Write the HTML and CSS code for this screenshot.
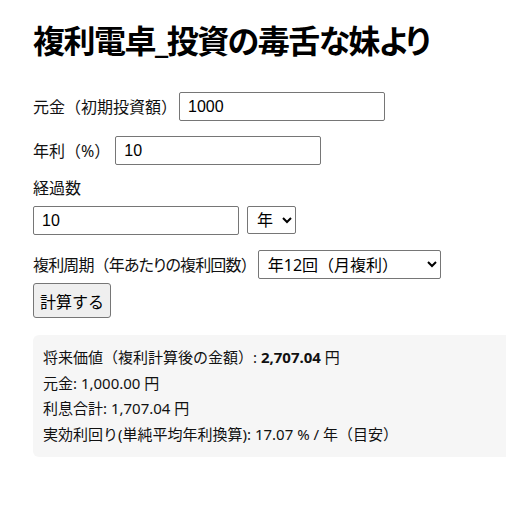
FILE: index.html
```html
<!DOCTYPE html>
<html lang="ja">
<head>
<meta charset="utf-8">
<title>複利電卓_投資の毒舌な妹より</title>
<link rel="stylesheet" href="styles.css">
</head>
<body>
<main class="page">
  <h1 class="title">複利電卓_投資の毒舌な妹より</h1>

  <div class="field">
    <label class="label" for="principal">元金（初期投資額）</label>
    <input class="text-input" id="principal" type="text" value="1000">
  </div>

  <div class="field">
    <label class="label label-rate" for="rate">年利（%）</label>
    <input class="text-input" id="rate" type="text" value="10">
  </div>

  <div class="field field-stacked">
    <label class="label" for="period">経過数</label>
    <div class="inline-group">
      <input class="text-input" id="period" type="text" value="10">
      <select class="select select-unit">
        <option>年</option>
      </select>
    </div>
  </div>

  <div class="field">
    <label class="label label-tight" for="freq">複利周期（年<span class="kana">あたりの</span>複利回数）</label>
    <select class="select select-freq" id="freq">
      <option>年12回（月複利）</option>
    </select>
  </div>

  <button class="button" type="button">計算する</button>

  <section class="result">
    <div class="result-line">将来価値（複利計算後の金額）: <strong>2,707.04</strong> 円</div>
    <div class="result-line">元金: 1,000.00 円</div>
    <div class="result-line">利息合計: 1,707.04 円</div>
    <div class="result-line">実効利回り(単純平均年利換算): 17.07 % / 年（目安）</div>
  </section>
</main>
</body>
</html>
```

FILE: styles.css
```css
html, body {
  margin: 0;
  padding: 0;
  background: #ffffff;
}

body {
  font-family: "Noto Sans", "Noto Sans CJK JP", sans-serif;
  font-size: 16px;
  color: #111111;
}

.page {
  padding: 18px 0 0 33px;
}

.title {
  margin: 0 0 28px 0;
  font-size: 32px;
  line-height: 46px;
  font-weight: 700;
  color: #000000;
  letter-spacing: -1.5px;
  font-feature-settings: "palt";
}

.field {
  display: flex;
  align-items: center;
  gap: 2px;
  margin-bottom: 15px;
}

.field-stacked {
  flex-direction: column;
  align-items: flex-start;
  gap: 6px;
  margin-top: -4px;
}

.label {
  line-height: 24px;
}

.label-rate {
  margin-right: 3px;
}

.label-tight {
  letter-spacing: -0.85px;
}

.kana {
  font-feature-settings: "palt";
}

.inline-group {
  display: flex;
  gap: 8px;
}

.text-input {
  box-sizing: border-box;
  width: 206px;
  height: 29px;
  padding: 0 8px;
  border: 1px solid #767676;
  border-radius: 2px;
  font-family: "Liberation Sans", Arial, sans-serif;
  font-size: 16px;
  color: #000000;
  background: #ffffff;
}

.select {
  box-sizing: border-box;
  height: 29px;
  padding: 0 5px;
  border: 1px solid #767676;
  border-radius: 2px;
  font-family: "Noto Sans", "Noto Sans CJK JP", sans-serif;
  font-size: 16px;
  color: #000000;
  background: #ffffff;
}

.select-unit {
  width: 49px;
  height: 28px;
}

.select-freq {
  width: 183px;
}

.button {
  display: block;
  box-sizing: border-box;
  margin-top: -11px;
  height: 35px;
  padding: 0 6px;
  border: 1px solid #767676;
  border-radius: 3px;
  background: #efefef;
  font-family: "Noto Sans", "Noto Sans CJK JP", sans-serif;
  font-size: 16px;
  color: #000000;
}

.result {
  margin-top: 17px;
  padding: 10px;
  background: #f6f6f6;
  border-radius: 6px 0 0 6px;
}

.result-line {
  line-height: 25.6px;
  font-size: 15px;
}
```
